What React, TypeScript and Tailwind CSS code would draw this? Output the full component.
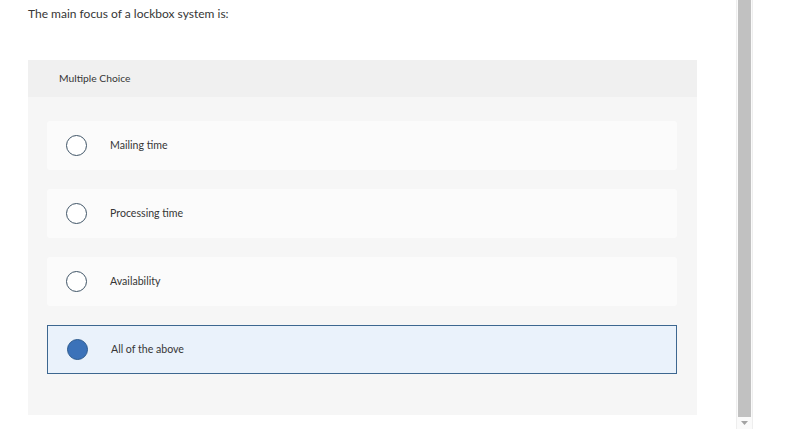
import React from 'react';

const options = [
    { label: 'Mailing time', selected: false },
    { label: 'Processing time', selected: false },
    { label: 'Availability', selected: false },
    { label: 'All of the above', selected: true },
];

const Radio: React.FC<{ checked: boolean }> = ({ checked }) => (
    <span
        className={
            checked
                ? 'w-[21px] h-[21px] rounded-full shrink-0 bg-[#3b72b9] border border-[#2d5b8e]'
                : 'w-[21px] h-[21px] rounded-full shrink-0 bg-white border-[1.5px] border-[#3f5466]'
        }
    />
);

export default function App() {
    return (
        <div className="w-[792px] h-[429px] flex bg-white text-[#363636] overflow-hidden" style={{ fontFamily: 'Lato, "Open Sans", sans-serif' }}>
            {/* Content */}
            <div className="w-[736px] shrink-0 pl-[28px]">
                <p className="pt-[6px] text-[12px] leading-[15px]">The main focus of a lockbox system is:</p>

                {/* Question panel */}
                <div className="mt-[39px] w-[669px] bg-[#f6f6f6]">
                    <div className="h-[37px] bg-[#f0f0f0] flex items-center pl-[31px] text-[10.3px]">
                        Multiple Choice
                    </div>

                    <div className="flex flex-col gap-[19px] px-[19px] pt-[24px] pb-[41px]">
                        {options.map((opt) => (
                            <div
                                key={opt.label}
                                className={
                                    opt.selected
                                        ? 'h-[49px] w-[630px] flex items-center pl-[19px] gap-[23px] bg-[#eaf2fb] border border-[#3d6790]'
                                        : 'h-[49px] w-[630px] flex items-center pl-[19px] gap-[23px] bg-[#fbfbfb] rounded-[3px]'
                                }
                            >
                                <Radio checked={opt.selected} />
                                <span className="text-[10.6px]">{opt.label}</span>
                            </div>
                        ))}
                    </div>
                </div>
            </div>

            {/* Scrollbar */}
            <div className="w-[17px] h-full shrink-0 flex flex-col border-x border-[#eeeeee] bg-[#fafafa]">
                <div className="flex-1 mx-[1px] bg-[#c1c1c1]" />
                <div className="h-[12px] flex items-center justify-center">
                    <svg width="7" height="4" viewBox="0 0 7 4">
                        <path d="M0 0 L7 0 L3.5 4 Z" fill="#a3a3a3" />
                    </svg>
                </div>
            </div>
        </div>
    );
}
